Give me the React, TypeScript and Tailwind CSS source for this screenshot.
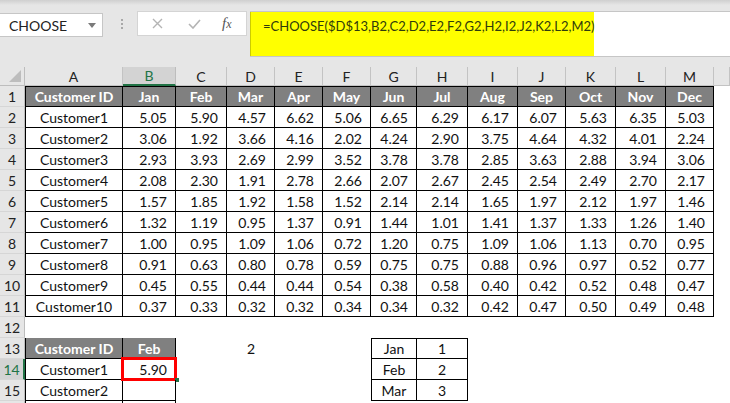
import React from 'react';

const COLS = ['A', 'B', 'C', 'D', 'E', 'F', 'G', 'H', 'I', 'J', 'K', 'L', 'M', ''];
const MONTHS = ['Jan', 'Feb', 'Mar', 'Apr', 'May', 'Jun', 'Jul', 'Aug', 'Sep', 'Oct', 'Nov', 'Dec'];

const DATA: [string, string[]][] = [
  ['Customer1', ['5.05', '5.90', '4.57', '6.62', '5.06', '6.65', '6.29', '6.17', '6.07', '5.63', '6.35', '5.03']],
  ['Customer2', ['3.06', '1.92', '3.66', '4.16', '2.02', '4.24', '2.90', '3.75', '4.64', '4.32', '4.01', '2.24']],
  ['Customer3', ['2.93', '3.93', '2.69', '2.99', '3.52', '3.78', '3.78', '2.85', '3.63', '2.88', '3.94', '3.06']],
  ['Customer4', ['2.08', '2.30', '1.91', '2.78', '2.66', '2.07', '2.67', '2.45', '2.54', '2.49', '2.70', '2.17']],
  ['Customer5', ['1.57', '1.85', '1.92', '1.58', '1.52', '2.14', '2.14', '1.65', '1.97', '2.12', '1.97', '1.46']],
  ['Customer6', ['1.32', '1.19', '0.95', '1.37', '0.91', '1.44', '1.01', '1.41', '1.37', '1.33', '1.26', '1.40']],
  ['Customer7', ['1.00', '0.95', '1.09', '1.06', '0.72', '1.20', '0.75', '1.09', '1.06', '1.13', '0.70', '0.95']],
  ['Customer8', ['0.91', '0.63', '0.80', '0.78', '0.59', '0.75', '0.75', '0.88', '0.96', '0.97', '0.52', '0.77']],
  ['Customer9', ['0.45', '0.55', '0.44', '0.44', '0.54', '0.38', '0.58', '0.40', '0.42', '0.52', '0.48', '0.47']],
  ['Customer10', ['0.37', '0.33', '0.32', '0.32', '0.34', '0.34', '0.32', '0.42', '0.47', '0.50', '0.49', '0.48']],
];

const LOOKUP = [
  ['Jan', '1'],
  ['Feb', '2'],
  ['Mar', '3'],
];

// one grid row = row header + 14 cells
const GRID = 'grid grid-cols-[25px_98px_53px_51px_48px_48px_48px_46px_51px_50px_48px_50px_50px_48px_1fr]';

const RowHead = ({ n, active }: { n?: number; active?: boolean }) => (
  <div
    className={`h-[21px] flex items-center justify-center border-b border-[#d6d6d6] ${
      active
        ? 'bg-[#d3d3d3] text-[#217346] border-r-2 border-r-[#217346]'
        : 'bg-[#e6e6e6] text-[#222] border-r border-r-[#bdbdbd]'
    }`}
  >
    {n}
  </div>
);

const Blank = () => <div className="h-[21px] bg-white" />;

const App = () => {
  return (
    <div className="w-[730px] h-[403px] overflow-hidden bg-white text-[14px] text-[#111] font-['Lato','Liberation_Sans',sans-serif]">
      {/* Formula bar */}
      <div className="h-[67px] bg-[#e6e6e6]">
        <div className="h-[5px] bg-gradient-to-b from-[#cfcfcf] to-[#e6e6e6]" />
        <div className="flex items-start pt-[6px]">
          <div className="mt-[2px] w-[103px] h-[24px] bg-white border border-l-0 border-[#c6c6c6] flex items-center justify-between pl-[9px] pr-[6px]">
            <span className="text-[#222]">CHOOSE</span>
            <svg width="8" height="5" viewBox="0 0 8 5">
              <path d="M0 0h8L4 5z" fill="#7a7a7a" />
            </svg>
          </div>
          <div className="ml-[18px] mt-[8px] flex flex-col gap-[2px]">
            <div className="w-[2px] h-[2px] bg-[#a8a8a8]" />
            <div className="w-[2px] h-[2px] bg-[#a8a8a8]" />
            <div className="w-[2px] h-[2px] bg-[#a8a8a8]" />
          </div>
          <div className="ml-[14px] w-[110px] h-[25px] bg-white border border-[#d4d4d4] flex items-center">
            <svg className="ml-[14px]" width="11" height="11" viewBox="0 0 11 11">
              <path d="M1 1l9 9M10 1l-9 9" stroke="#b4b4b4" strokeWidth="1.4" />
            </svg>
            <svg className="ml-[25px]" width="13" height="10" viewBox="0 0 13 10">
              <path d="M1 5l4 4 7-8" stroke="#b4b4b4" strokeWidth="1.6" fill="none" />
            </svg>
            <span className="ml-[21px] italic text-[#555] text-[15px] font-['Liberation_Serif',serif]">
              f<span className="text-[12px]">x</span>
            </span>
          </div>
          <div className="ml-[3px] flex-1 h-[46px] flex bg-white border-y border-[#c6c6c6]">
            <div className="w-[344px] h-full bg-[#ffff00] border-l border-[#cccc00] pl-[12px] pt-[5px] text-[13px] text-[#2f3b0c]">
              =CHOOSE($D$13,B2,C2,D2,E2,F2,G2,H2,I2,J2,K2,L2,M2)
            </div>
          </div>
        </div>
      </div>

      {/* Column headers */}
      <div className={GRID}>
        <div className="h-[19px] bg-[#e6e6e6] border-r border-b border-[#bdbdbd] flex items-end justify-end p-[3px]">
          <svg width="12" height="12" viewBox="0 0 12 12">
            <path d="M12 0v12H0z" fill="#bdbdbd" />
          </svg>
        </div>
        {COLS.map((c, i) =>
          c === 'B' ? (
            <div
              key={i}
              className="h-[19px] bg-[#d3d3d3] text-[#217346] border-r border-[#bdbdbd] border-b-2 border-b-[#217346] flex items-center justify-center"
            >
              {c}
            </div>
          ) : (
            <div
              key={i}
              className="h-[19px] bg-[#e6e6e6] text-[#222] border-r border-b border-[#c3c3c3] flex items-center justify-center"
            >
              {c}
            </div>
          )
        )}
      </div>

      {/* Row 1: header */}
      <div className={GRID}>
        <RowHead n={1} />
        <div className="h-[21px] bg-[#808080] text-white font-bold border border-black flex items-center justify-center">
          Customer ID
        </div>
        {MONTHS.map((m) => (
          <div
            key={m}
            className="h-[21px] bg-[#808080] text-white font-bold border-y border-r border-black flex items-center justify-center"
          >
            {m}
          </div>
        ))}
        <Blank />
      </div>

      {/* Rows 2-11 */}
      {DATA.map(([name, vals], r) => (
        <div key={name} className={GRID}>
          <RowHead n={r + 2} />
          <div className="h-[21px] border-x border-b border-black flex items-center justify-center">{name}</div>
          {vals.map((v, i) => (
            <div key={i} className="h-[21px] border-r border-b border-black flex items-center justify-end pr-[8px]">
              {v}
            </div>
          ))}
          <Blank />
        </div>
      ))}

      {/* Row 12 */}
      <div className={GRID}>
        <RowHead n={12} />
        {COLS.map((_, i) => (
          <Blank key={i} />
        ))}
      </div>

      {/* Rows 13-15 */}
      {[13, 14, 15].map((n, r) => (
        <div key={n} className={GRID}>
          <RowHead n={n} active={n === 14} />
          {n === 13 ? (
            <>
              <div className="h-[21px] bg-[#808080] text-white font-bold border-x border-b border-black flex items-center justify-center">
                Customer ID
              </div>
              <div className="h-[21px] bg-[#808080] text-white font-bold border-r border-b border-black flex items-center justify-center">
                Feb
              </div>
            </>
          ) : (
            <>
              <div className="h-[21px] border-x border-b border-black flex items-center justify-center">
                {n === 14 ? 'Customer1' : 'Customer2'}
              </div>
              <div className="relative h-[21px] border-r border-b border-black flex items-center justify-end pr-[8px]">
                {n === 14 && (
                  <>
                    5.90
                    <div className="absolute -left-[2px] -top-[2px] -right-[2px] -bottom-[2px] border-[3px] border-[#ff0000]" />
                    <div className="absolute -right-[4px] -bottom-[3px] w-[4px] h-[4px] bg-[#217346]" />
                  </>
                )}
              </div>
            </>
          )}
          <Blank />
          <div className="h-[21px] flex items-center justify-center">{n === 13 ? '2' : ''}</div>
          <Blank />
          <Blank />
          <div
            className={`h-[21px] border-x border-b border-black flex items-center justify-center ${
              r === 0 ? 'border-t' : ''
            }`}
          >
            {LOOKUP[r][0]}
          </div>
          <div
            className={`h-[21px] border-r border-b border-black flex items-center justify-center ${
              r === 0 ? 'border-t' : ''
            }`}
          >
            {LOOKUP[r][1]}
          </div>
          <Blank />
          <Blank />
          <Blank />
          <Blank />
          <Blank />
          <Blank />
        </div>
      ))}

      {/* Row 16, cut off by the window */}
      <div className={GRID}>
        <RowHead />
        <div className="h-[21px] border-x border-black" />
        <div className="h-[21px] border-r border-black" />
      </div>
    </div>
  );
};

export default App;
